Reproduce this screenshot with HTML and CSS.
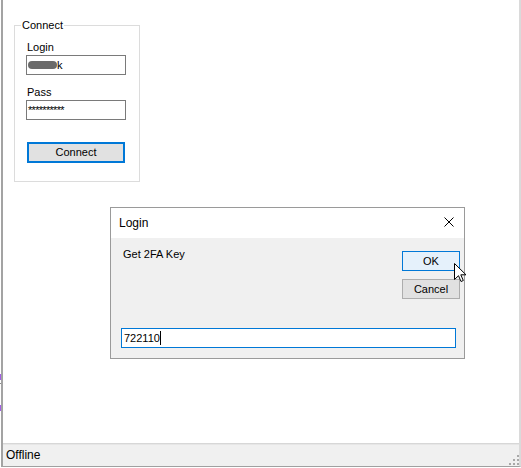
FILE: index.html
```html
<!DOCTYPE html>
<html>
<head>
<meta charset="utf-8">
<link rel="stylesheet" href="styles.css">
</head>
<body>
<div class="screen">
  <div class="edge"><span class="mark m1"></span><span class="tick"></span><span class="mark m2"></span></div>
  <div class="window">
    <div class="client">
      <div class="group">
        <span class="group-title">Connect</span>
        <div class="field-label">Login</div>
        <div class="textbox"><span class="redact"></span>k</div>
        <div class="field-label pass">Pass</div>
        <div class="textbox pw">**********</div>
        <div class="btn connect">Connect</div>
      </div>
    </div>
    <div class="status">
      <span class="status-text">Offline</span>
      <svg class="grip" width="10" height="10" viewBox="0 0 10 10">
        <rect x="8" y="0" width="2" height="2" fill="#a8a8a8"/>
        <rect x="4" y="4" width="2" height="2" fill="#a8a8a8"/>
        <rect x="8" y="4" width="2" height="2" fill="#a8a8a8"/>
        <rect x="0" y="8" width="2" height="2" fill="#a8a8a8"/>
        <rect x="4" y="8" width="2" height="2" fill="#a8a8a8"/>
        <rect x="8" y="8" width="2" height="2" fill="#a8a8a8"/>
      </svg>
    </div>
  </div>

  <div class="dialog">
    <div class="titlebar">
      <span class="title">Login</span>
      <svg class="close" width="10" height="10" viewBox="0 0 10 10">
        <path d="M0.5 0.5 L9.5 9.5 M9.5 0.5 L0.5 9.5" stroke="#000" stroke-width="1" fill="none"/>
      </svg>
    </div>
    <div class="dlg-body">
      <div class="dlg-top">
        <div class="prompt">Get 2FA Key</div>
        <div class="dlg-buttons">
          <div class="dbtn ok">OK</div>
          <div class="dbtn cancel">Cancel</div>
        </div>
      </div>
      <div class="keybox">722110<span class="caret"></span></div>
    </div>
  </div>

  <svg class="cursor" width="13" height="20" viewBox="0 0 13 20">
    <path d="M0.5 0.5 V16.5 L4.5 12.7 L7 18.5 L9.3 17.5 L6.8 11.8 H12 Z" fill="#fff" stroke="#000" stroke-width="1" stroke-linejoin="miter"/>
  </svg>
</div>
</body>
</html>
```

FILE: styles.css
```css
html, body {
  margin: 0;
  padding: 0;
  background: #ffffff;
}

.screen {
  position: relative;
  width: 521px;
  height: 468px;
  display: flex;
  overflow: hidden;
  font-family: "Liberation Sans", Arial, sans-serif;
  color: #000;
}

.edge {
  width: 1px;
  display: flex;
  flex-direction: column;
  padding-top: 374px;
}

.mark {
  display: block;
  width: 1px;
  height: 6px;
  background: #a35fe6;
}

.tick {
  display: block;
  width: 1px;
  height: 1px;
  margin-top: 3px;
  background: #8a8a8a;
}

.m2 {
  margin-top: 21px;
}

.window {
  width: 520px;
  height: 467px;
  box-sizing: border-box;
  border-left: 2px solid #a3a3a3;
  border-right: 2px solid #dadada;
  border-bottom: 1px solid #a0a0a0;
  display: flex;
  flex-direction: column;
}

.client {
  flex: 1;
  background: #ffffff;
  padding-top: 25px;
  padding-left: 11px;
}

.group {
  position: relative;
  width: 126px;
  height: 157px;
  box-sizing: border-box;
  border: 1px solid #dcdcdc;
  padding: 15px 0 0 11px;
  font-size: 11px;
}

.group-title {
  position: absolute;
  left: 6px;
  top: -7px;
  padding: 0 1px;
  background: #ffffff;
  line-height: 13px;
  font-size: 11px;
}

.field-label {
  margin-left: 1px;
  height: 13px;
  line-height: 13px;
}

.field-label.pass {
  margin-top: 11px;
}

.textbox {
  margin-top: 1px;
  width: 100px;
  height: 20px;
  box-sizing: border-box;
  border: 1px solid #7a7a7a;
  background: #fff;
  padding-left: 1px;
  line-height: 18px;
  font-size: 11px;
  white-space: nowrap;
  overflow: hidden;
}

.redact {
  display: inline-block;
  width: 29px;
  height: 8px;
  border-radius: 4px;
  background: #6b6b6b;
  vertical-align: baseline;
}

.pw {
  letter-spacing: -0.7px;
}

.btn {
  box-sizing: border-box;
  text-align: center;
}

.connect {
  margin-top: 22px;
  margin-left: 1px;
  width: 98px;
  height: 21px;
  border: 2px solid #0078d7;
  background: #e1e1e1;
  line-height: 17px;
  font-size: 11px;
}

.status {
  height: 23px;
  box-sizing: border-box;
  border-top: 1px solid #d7d7d7;
  box-shadow: inset 0 1px 0 #e6e6e6;
  background: #f0f0f0;
  display: flex;
  padding-left: 3px;
}

.status-text {
  font-size: 12px;
  line-height: 22px;
}

.grip {
  margin-left: auto;
  align-self: flex-end;
  margin-bottom: 1px;
}

.dialog {
  position: absolute;
  left: 110px;
  top: 207px;
  width: 355px;
  height: 152px;
  box-sizing: border-box;
  border: 1px solid #9a9a9a;
  background: #f0f0f0;
  display: flex;
  flex-direction: column;
}

.titlebar {
  height: 30px;
  background: #ffffff;
  display: flex;
  align-items: center;
  padding-left: 8px;
}

.title {
  font-size: 12px;
  line-height: 30px;
}

.close {
  margin-left: auto;
  margin-right: 10px;
  margin-bottom: 2px;
}

.dlg-body {
  flex: 1;
  display: flex;
  flex-direction: column;
}

.dlg-top {
  display: flex;
  padding-top: 10px;
}

.prompt {
  padding-left: 12px;
  font-size: 11px;
  line-height: 13px;
}

.dlg-buttons {
  margin-left: auto;
  margin-right: 4px;
  margin-top: 3px;
  display: flex;
  flex-direction: column;
  gap: 8px;
}

.dbtn {
  width: 58px;
  height: 20px;
  box-sizing: border-box;
  text-align: center;
  font-size: 11px;
  line-height: 18px;
}

.ok {
  border: 1px solid #0078d7;
  background: #e5f1fb;
}

.cancel {
  border: 1px solid #adadad;
  background: #e1e1e1;
}

.keybox {
  margin: auto 0 10px 10px;
  width: 335px;
  height: 20px;
  box-sizing: border-box;
  border: 1px solid #0078d7;
  background: #ffffff;
  padding-left: 2px;
  font-size: 11px;
  line-height: 18px;
}

.caret {
  display: inline-block;
  width: 1px;
  height: 14px;
  background: #000;
  vertical-align: -3px;
}

.cursor {
  position: absolute;
  left: 454px;
  top: 263px;
}
```
